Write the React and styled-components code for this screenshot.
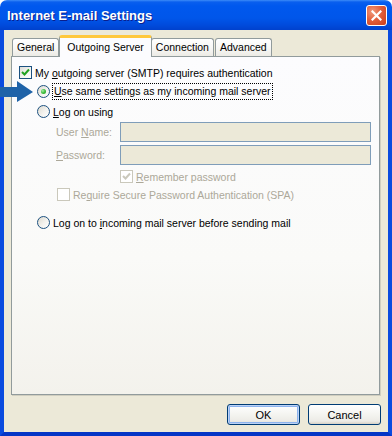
import React from 'react'
import styled, { createGlobalStyle } from 'styled-components'

const GlobalStyle = createGlobalStyle`
  html, body { margin: 0; padding: 0; background: #fff; }
  body { font-family: "Liberation Sans", Arial, sans-serif; font-size: 10.5px; }
`

const Window = styled.div`
  position: relative;
  width: 392px;
  height: 436px;
  display: flex;
  flex-direction: column;
  overflow: hidden;
`

const TitleBar = styled.div`
  height: 30px;
  flex: none;
  box-sizing: border-box;
  display: flex;
  align-items: center;
  justify-content: space-between;
  padding: 0 5px 0 7px;
  border-radius: 7px 7px 0 0;
  background: linear-gradient(to bottom, #3C8CF8 0, #0A5FEE 2px, #0058EE 6px, #0056EA 18px, #004BDC 25px, #0041CD 30px);
`

const Title = styled.div`
  color: #fff;
  font-family: "Liberation Sans", Arial, sans-serif;
  font-weight: bold;
  font-size: 13px;
  text-shadow: 1px 1px #0A1E8C;
  margin-top: 1px;
`

const CloseButton = styled.div`
  width: 21px;
  height: 21px;
  box-sizing: border-box;
  border: 1px solid #fff;
  border-radius: 3px;
  background: radial-gradient(circle at 30% 30%, #F09A7C 0, #E2603D 45%, #CB3D1A 100%);
  display: flex;
  align-items: center;
  justify-content: center;
  margin-top: 1px;
`

const Body = styled.div`
  flex: 1;
  display: flex;
  flex-direction: column;
  background: #ECE9D8;
  border-left: 4px solid #0A4BDF;
  border-right: 4px solid #0A4BDF;
  border-bottom: 4px solid #0535C6;
  padding: 5px 7px 7px 7px;
  min-height: 0;
`

const TabStrip = styled.div`
  height: 21px;
  flex: none;
  display: flex;
  align-items: flex-end;
  padding-left: 1px;
`

const Tab = styled.div`
  position: relative;
  box-sizing: border-box;
  height: ${p => (p.$active ? '22px' : '18px')};
  margin: ${p => (p.$active ? '0 -1px -1px -1px' : '0 1px 0 0')};
  z-index: ${p => (p.$active ? 2 : 1)};
  padding: ${p => (p.$active ? '3px 7px 0' : '2px 4px 0')};
  border: 1px solid #919B9C;
  border-bottom: none;
  border-top: ${p => (p.$active ? '3px solid #FFC83C' : '1px solid #919B9C')};
  border-radius: 3px 3px 0 0;
  background: ${p => (p.$active ? '#FCFCFE' : 'linear-gradient(to bottom, #FFFFFF 0, #F8F8F6 50%, #ECEBE5 100%)')};
  color: #000;
  white-space: nowrap;
  line-height: 13px;
`

const Panel = styled.div`
  flex: 1;
  box-sizing: border-box;
  border: 1px solid #919B9C;
  box-shadow: 1px 1px 0 #D0CEBF;
  background: linear-gradient(to bottom, #FCFCFE 0, #FAFAF8 60%, #F3F2EC 100%);
  padding: 7px 8px 0 7px;
  display: flex;
  flex-direction: column;
  margin-right: 1px;
`

const Row = styled.div`
  display: flex;
  align-items: center;
  height: ${p => p.$h || 17}px;
  margin-top: ${p => p.$mt || 0}px;
  padding-left: ${p => p.$indent || 0}px;
  gap: ${p => p.$gap ?? 3}px;
  color: ${p => (p.$disabled ? '#ACA899' : '#000')};
  white-space: nowrap;
`

const Radio = styled.span`
  flex: none;
  width: 13px;
  height: 13px;
  box-sizing: border-box;
  border-radius: 50%;
  border: 1px solid #1C5180;
  background: linear-gradient(135deg, #DCD9CF 0, #F3F2EE 55%, #FFFFFF 100%);
  display: inline-flex;
  align-items: center;
  justify-content: center;
  &::after {
    content: '';
    display: ${p => (p.$checked ? 'block' : 'none')};
    width: 5px;
    height: 5px;
    border-radius: 50%;
    background: radial-gradient(circle at 35% 35%, #A6EFA6 0, #3CBC3C 50%, #21A121 100%);
  }
`

const Check = styled.span`
  flex: none;
  width: 13px;
  height: 13px;
  box-sizing: border-box;
  border: 1px solid ${p => (p.$disabled ? '#CAC8BB' : '#1C5180')};
  background: ${p => (p.$disabled ? '#FFFFFF' : 'linear-gradient(135deg, #DCDCD7 0, #F4F4F0 55%, #FFFFFF 100%)')};
  display: inline-flex;
  align-items: center;
  justify-content: center;
`

const Focus = styled.span`
  outline: 1px dotted #000;
  outline-offset: 0;
  padding: 1px 1px 2px 1px;
`

const Label = styled.span`
  width: 64px;
  flex: none;
`

const Field = styled.div`
  width: 254px;
  height: 20px;
  box-sizing: border-box;
  border: 1px solid #7F9DB9;
  background: #ECE9D8;
`

const ButtonBar = styled.div`
  flex: none;
  display: flex;
  justify-content: flex-end;
  gap: 8px;
  margin-top: 9px;
`

const Button = styled.button`
  width: 73px;
  height: 21px;
  box-sizing: border-box;
  border: 1px solid #003C74;
  border-radius: 3px;
  background: linear-gradient(to bottom, #FFFFFF 0, #F4F4F0 50%, #ECEBE6 85%, #D6D0C5 100%);
  box-shadow: ${p => (p.$default ? 'inset 0 0 0 1px #BCD2F5, inset 0 0 0 2px #8CB3EE' : 'none')};
  font-family: "Liberation Sans", Arial, sans-serif;
  font-size: 11px;
  color: #000;
  padding: 0;
`

const ArrowMark = styled.svg`
  position: absolute;
  left: 0;
  top: 81px;
`

const u = ch => <span style={{ textDecoration: 'underline' }}>{ch}</span>

function CheckMark({ color }) {
  return (
    <svg width="9" height="9" viewBox="0 0 9 9">
      <path d="M1 4 L3.5 6.5 L8 1.5" fill="none" stroke={color} strokeWidth="2" />
    </svg>
  )
}

export default function App() {
  return (
    <>
      <GlobalStyle />
      <Window>
        <TitleBar>
          <Title>Internet E-mail Settings</Title>
          <CloseButton>
            <svg width="11" height="11" viewBox="0 0 11 11">
              <path d="M1.5 1.5 L9.5 9.5 M9.5 1.5 L1.5 9.5" stroke="#fff" strokeWidth="2.2" strokeLinecap="square" />
            </svg>
          </CloseButton>
        </TitleBar>
        <Body>
          <TabStrip>
            <Tab>General</Tab>
            <Tab $active>Outgoing Server</Tab>
            <Tab>Connection</Tab>
            <Tab>Advanced</Tab>
          </TabStrip>
          <Panel>
            <Row>
              <Check><CheckMark color="#21A121" /></Check>
              <span>My {u('o')}utgoing server (SMTP) requires authentication</span>
            </Row>
            <Row $mt={2} $indent={18}>
              <Radio $checked />
              <Focus>{u('U')}se same settings as my incoming mail server</Focus>
            </Row>
            <Row $mt={3} $indent={18}>
              <Radio />
              <span>{u('L')}og on using</span>
            </Row>
            <Row $mt={2} $h={20} $indent={37} $gap={0} $disabled>
              <Label>User {u('N')}ame:</Label>
              <Field />
            </Row>
            <Row $mt={3} $h={20} $indent={37} $gap={0} $disabled>
              <Label>{u('P')}assword:</Label>
              <Field />
            </Row>
            <Row $mt={3} $indent={101} $disabled>
              <Check $disabled><CheckMark color="#CAC8BB" /></Check>
              <span>{u('R')}emember password</span>
            </Row>
            <Row $mt={1} $indent={38} $disabled>
              <Check $disabled />
              <span>Re{u('q')}uire Secure Password Authentication (SPA)</span>
            </Row>
            <Row $mt={11} $indent={18}>
              <Radio />
              <span>Log on to {u('i')}ncoming mail server before sending mail</span>
            </Row>
          </Panel>
          <ButtonBar>
            <Button $default>OK</Button>
            <Button>Cancel</Button>
          </ButtonBar>
        </Body>
        <ArrowMark width="34" height="22" viewBox="0 0 34 22">
          <path d="M0 6 L17 6 L17 0 L33 11 L17 21 L17 16 L0 16 Z" fill="#1F63A8" />
        </ArrowMark>
      </Window>
    </>
  )
}
